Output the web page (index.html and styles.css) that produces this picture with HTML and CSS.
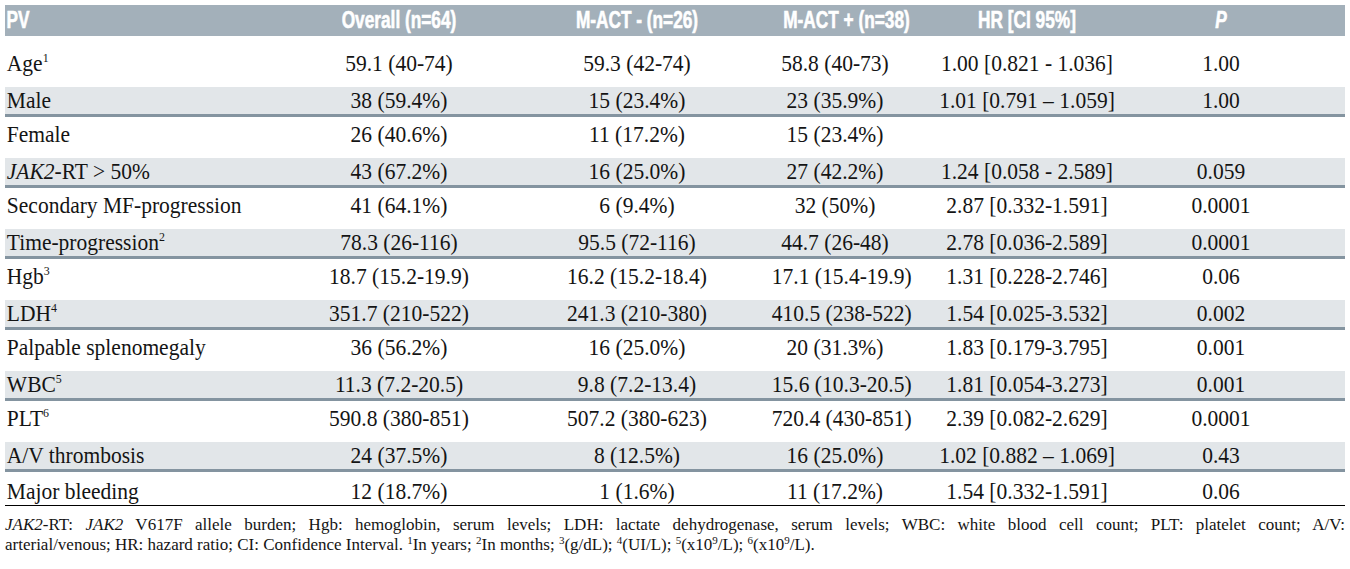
FILE: index.html
```html
<!DOCTYPE html>
<html lang="en">
<head>
<meta charset="utf-8">
<title>PV table</title>
<link rel="stylesheet" href="styles.css">
</head>
<body>
<div class="wrap">
  <div class="table">
    <div class="row head">
      <div class="c lab">PV</div>
      <div class="c">Overall (n=64)</div>
      <div class="c">M-ACT - (n=26)</div>
      <div class="c">M-ACT + (n=38)</div>
      <div class="c">HR [CI 95%]</div>
      <div class="c"><i>P</i></div>
    </div>
    <div class="row plain first">
      <div class="c lab">Age<sup class="sup">1</sup></div>
      <div class="c">59.1 (40-74)</div>
      <div class="c">59.3 (42-74)</div>
      <div class="c">58.8 (40-73)</div>
      <div class="c">1.00 [0.821 - 1.036]</div>
      <div class="c">1.00</div>
    </div>
    <div class="row shade">
      <div class="c lab">Male</div>
      <div class="c">38 (59.4%)</div>
      <div class="c">15 (23.4%)</div>
      <div class="c">23 (35.9%)</div>
      <div class="c">1.01 [0.791 – 1.059]</div>
      <div class="c">1.00</div>
    </div>
    <div class="row plain">
      <div class="c lab">Female</div>
      <div class="c">26 (40.6%)</div>
      <div class="c">11 (17.2%)</div>
      <div class="c">15 (23.4%)</div>
      <div class="c"></div>
      <div class="c"></div>
    </div>
    <div class="row shade">
      <div class="c lab"><i>JAK2</i>-RT &gt; 50%</div>
      <div class="c">43 (67.2%)</div>
      <div class="c">16 (25.0%)</div>
      <div class="c">27 (42.2%)</div>
      <div class="c">1.24 [0.058 - 2.589]</div>
      <div class="c">0.059</div>
    </div>
    <div class="row plain">
      <div class="c lab">Secondary MF-progression</div>
      <div class="c">41 (64.1%)</div>
      <div class="c">6 (9.4%)</div>
      <div class="c">32 (50%)</div>
      <div class="c">2.87 [0.332-1.591]</div>
      <div class="c">0.0001</div>
    </div>
    <div class="row shade">
      <div class="c lab">Time-progression<sup class="sup">2</sup></div>
      <div class="c">78.3 (26-116)</div>
      <div class="c">95.5 (72-116)</div>
      <div class="c">44.7 (26-48)</div>
      <div class="c">2.78 [0.036-2.589]</div>
      <div class="c">0.0001</div>
    </div>
    <div class="row plain">
      <div class="c lab">Hgb<sup class="sup">3</sup></div>
      <div class="c">18.7 (15.2-19.9)</div>
      <div class="c">16.2 (15.2-18.4)</div>
      <div class="c">17.1 (15.4-19.9)</div>
      <div class="c">1.31 [0.228-2.746]</div>
      <div class="c">0.06</div>
    </div>
    <div class="row shade">
      <div class="c lab">LDH<sup class="sup">4</sup></div>
      <div class="c">351.7 (210-522)</div>
      <div class="c">241.3 (210-380)</div>
      <div class="c">410.5 (238-522)</div>
      <div class="c">1.54 [0.025-3.532]</div>
      <div class="c">0.002</div>
    </div>
    <div class="row plain">
      <div class="c lab">Palpable splenomegaly</div>
      <div class="c">36 (56.2%)</div>
      <div class="c">16 (25.0%)</div>
      <div class="c">20 (31.3%)</div>
      <div class="c">1.83 [0.179-3.795]</div>
      <div class="c">0.001</div>
    </div>
    <div class="row shade">
      <div class="c lab">WBC<sup class="sup">5</sup></div>
      <div class="c">11.3 (7.2-20.5)</div>
      <div class="c">9.8 (7.2-13.4)</div>
      <div class="c">15.6 (10.3-20.5)</div>
      <div class="c">1.81 [0.054-3.273]</div>
      <div class="c">0.001</div>
    </div>
    <div class="row plain">
      <div class="c lab">PLT<sup class="sup">6</sup></div>
      <div class="c">590.8 (380-851)</div>
      <div class="c">507.2 (380-623)</div>
      <div class="c">720.4 (430-851)</div>
      <div class="c">2.39 [0.082-2.629]</div>
      <div class="c">0.0001</div>
    </div>
    <div class="row shade">
      <div class="c lab">A/V thrombosis</div>
      <div class="c">24 (37.5%)</div>
      <div class="c">8 (12.5%)</div>
      <div class="c">16 (25.0%)</div>
      <div class="c">1.02 [0.882 – 1.069]</div>
      <div class="c">0.43</div>
    </div>
    <div class="row plain last">
      <div class="c lab">Major bleeding</div>
      <div class="c">12 (18.7%)</div>
      <div class="c">1 (1.6%)</div>
      <div class="c">11 (17.2%)</div>
      <div class="c">1.54 [0.332-1.591]</div>
      <div class="c">0.06</div>
    </div>
  </div>
  <div class="note">
    <div class="note-line justify"><i>JAK2</i>-RT: <i>JAK2</i> V617F allele burden; Hgb: hemoglobin, serum levels; LDH: lactate dehydrogenase, serum levels; WBC: white blood cell count; PLT: platelet count; A/V:</div>
    <div class="note-line">arterial/venous; HR: hazard ratio; CI: Confidence Interval. <sup class="nsup">1</sup>In years; <sup class="nsup">2</sup>In months; <sup class="nsup">3</sup>(g/dL); <sup class="nsup">4</sup>(UI/L); <sup class="nsup">5</sup>(x10<sup class="nsup">9</sup>/L); <sup class="nsup">6</sup>(x10<sup class="nsup">9</sup>/L).</div>
  </div>
</div>
</body>
</html>
```

FILE: styles.css
```css
html, body {
  margin: 0;
  padding: 0;
  background: #ffffff;
}

.wrap {
  padding: 5px 5px 0 5px;
  width: 1340px;
  font-family: "Liberation Serif", "Times New Roman", serif;
  color: #141414;
}

.table {
  width: 1340px;
}

.row {
  display: grid;
  grid-template-columns: 285px 218px 258px 138px 246px 142px;
  font-size: 23.5px;
}

.c {
  text-align: center;
  white-space: nowrap;
  transform: scaleX(0.915);
  transform-origin: center center;
}

.lab {
  text-align: left;
  padding-left: 2px;
  transform-origin: left center;
}

.head {
  height: 31px;
  line-height: 31px;
  background: #a3b0ba;
  color: #ffffff;
  font-family: "Liberation Sans", "Arial", sans-serif;
  font-weight: bold;
  font-size: 23px;
  -webkit-text-stroke: 0.6px #ffffff;
}

.head .c {
  transform: scaleX(0.75);
}

.head .lab {
  transform-origin: left center;
}

.plain {
  height: 37px;
  padding-top: 4px;
  line-height: 26px;
}

.first {
  height: 37px;
  padding-top: 14px;
}

.shade {
  height: 27px;
  line-height: 27px;
  background: #e2e6e9;
  border-bottom: 3px solid #8494a0;
}

.last {
  height: 27px;
  padding-top: 6px;
  border-bottom: 1px solid #000000;
}

.sup {
  font-size: 13px;
  line-height: 0;
  vertical-align: 9px;
}

.note {
  margin-top: 9px;
  font-size: 17px;
  line-height: 20px;
}

.note-line {
  white-space: nowrap;
}

.justify {
  text-align: justify;
  text-align-last: justify;
  white-space: normal;
}

.nsup {
  font-size: 11px;
  line-height: 0;
  vertical-align: 6px;
}
```
